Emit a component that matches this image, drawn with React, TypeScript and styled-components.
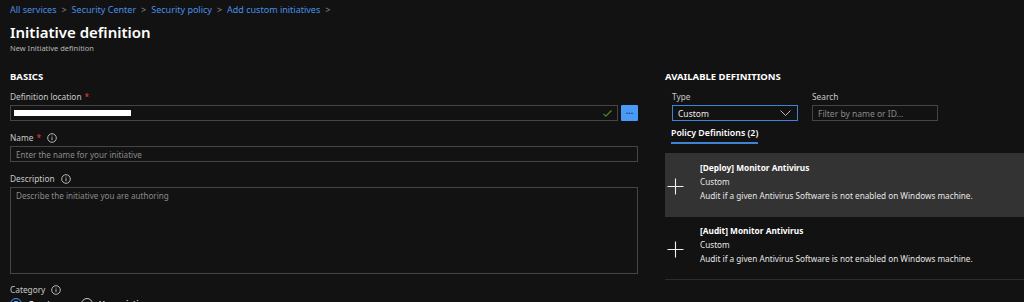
import React from "react";
import styled, { createGlobalStyle } from "styled-components";

const Global = createGlobalStyle`
  html, body {
    margin: 0;
    padding: 0;
    background: #121212;
    overflow: hidden;
  }
  body {
    font-family: "Noto Sans", "Open Sans", sans-serif;
    color: #d6d6d6;
  }
`;

const InfoIcon = () => (
  <svg width="10" height="10" viewBox="0 0 10 10">
    <circle cx="5" cy="5" r="4.3" fill="none" stroke="#c8c8c8" strokeWidth="0.9" />
    <rect x="4.55" y="4.2" width="0.9" height="3" fill="#c8c8c8" />
    <rect x="4.55" y="2.6" width="0.9" height="0.9" fill="#c8c8c8" />
  </svg>
);

const PlusIcon = () => (
  <svg width="17" height="17" viewBox="0 0 17 17">
    <path d="M8.5 0.5v16M0.5 8.5h16" stroke="#f0f0f0" strokeWidth="1.1" />
  </svg>
);

const crumbs = ["All services", "Security Center", "Security policy", "Add custom initiatives"];

const defs = [
  {
    title: "[Deploy] Monitor Antivirus",
    type: "Custom",
    desc: "Audit if a given Antivirus Software is not enabled on Windows machine.",
    active: true,
  },
  {
    title: "[Audit] Monitor Antivirus",
    type: "Custom",
    desc: "Audit if a given Antivirus Software is not enabled on Windows machine.",
    active: false,
  },
];

const App = () => {
  return (
    <S.Page>
      <Global />
      <S.Header>
        <S.Crumbs>
          {crumbs.map((c) => (
            <React.Fragment key={c}>
              <a>{c}</a>
              <span className="sep">&gt;</span>
            </React.Fragment>
          ))}
        </S.Crumbs>
        <S.Title>Initiative definition</S.Title>
        <S.Subtitle>New Initiative definition</S.Subtitle>
      </S.Header>

      <S.Columns>
        <S.Basics>
          <S.Section>BASICS</S.Section>

          <S.Label>
            Definition location <span className="req">*</span>
          </S.Label>
          <S.Row>
            <S.LocationBox>
              <span className="redacted" />
              <svg className="check" width="9" height="7" viewBox="0 0 9 7">
                <path d="M0.5 3.8l2.3 2.3 5.7-5.6" fill="none" stroke="#4c8a2a" strokeWidth="1.2" />
              </svg>
            </S.LocationBox>
            <S.DotsButton>...</S.DotsButton>
          </S.Row>

          <S.Label>
            Name <span className="req">*</span>
            <InfoIcon />
          </S.Label>
          <S.Input placeholder="Enter the name for your initiative" />

          <S.Label>
            Description
            <InfoIcon />
          </S.Label>
          <S.Textarea placeholder="Describe the initiative you are authoring" />

          <S.Label>
            Category
            <InfoIcon />
          </S.Label>
          <S.Radios>
            <S.Radio $checked>
              <span className="dot" />
              Create new
            </S.Radio>
            <S.Radio>
              <span className="dot" />
              Use existing
            </S.Radio>
          </S.Radios>
        </S.Basics>

        <S.Available>
          <S.Section>AVAILABLE DEFINITIONS</S.Section>
          <S.Filters>
            <div>
              <S.SmallLabel>Type</S.SmallLabel>
              <S.Select>
                Custom
                <svg width="11" height="6" viewBox="0 0 11 6">
                  <path d="M0.5 0.5l5 5 5-5" fill="none" stroke="#d0d0d0" strokeWidth="0.9" />
                </svg>
              </S.Select>
            </div>
            <div>
              <S.SmallLabel>Search</S.SmallLabel>
              <S.Search placeholder="Filter by name or ID..." />
            </div>
          </S.Filters>
          <S.Tab>Policy Definitions (2)</S.Tab>
          <S.List>
            {defs.map((d) => (
              <S.Item key={d.title} $active={d.active}>
                <div className="plus">
                  <PlusIcon />
                </div>
                <div className="text">
                  <strong>{d.title}</strong>
                  <span>{d.type}</span>
                  <span>{d.desc}</span>
                </div>
              </S.Item>
            ))}
          </S.List>
        </S.Available>
      </S.Columns>
    </S.Page>
  );
};

const S = {
  Page: styled.div`
    height: 302px;
    padding: 0 10px;
    box-sizing: border-box;
  `,
  Header: styled.div`
    padding-top: 3px;
  `,
  Crumbs: styled.div`
    display: flex;
    align-items: center;
    gap: 5px;
    font-size: 9px;
    line-height: 14px;
    a {
      color: #4b8fe8;
    }
    .sep {
      color: #8a8a8a;
    }
  `,
  Title: styled.h1`
    margin: 4px 0 0;
    font-size: 15px;
    line-height: 22px;
    font-weight: 600;
    color: #ffffff;
  `,
  Subtitle: styled.div`
    font-size: 7.5px;
    line-height: 10px;
    color: #b8b8b8;
  `,
  Columns: styled.div`
    display: flex;
    margin-top: 17px;
  `,
  Basics: styled.div`
    width: 628px;
    display: flex;
    flex-direction: column;
  `,
  Available: styled.div`
    flex: 1;
    margin-left: 27px;
    margin-right: -10px;
    display: flex;
    flex-direction: column;
  `,
  Section: styled.div`
    font-size: 9.5px;
    line-height: 13px;
    font-weight: 700;
    color: #ffffff;
    margin-bottom: 8px;
  `,
  Label: styled.div`
    display: flex;
    align-items: center;
    gap: 3px;
    font-size: 8.3px;
    line-height: 12px;
    color: #c8c8c8;
    margin-bottom: 2px;
    .req {
      color: #e04343;
    }
    svg {
      margin-left: 3px;
    }
  `,
  Row: styled.div`
    display: flex;
    align-items: center;
    gap: 3px;
    margin-bottom: 11px;
  `,
  LocationBox: styled.div`
    flex: 1;
    height: 16px;
    box-sizing: border-box;
    border: 1px solid #454545;
    display: flex;
    align-items: center;
    justify-content: space-between;
    padding: 0 5px 0 3px;
    .redacted {
      width: 117px;
      height: 6px;
      margin-top: -1px;
      background: #ffffff;
    }
  `,
  DotsButton: styled.div`
    width: 17px;
    height: 16px;
    background: #4a9af8;
    border-radius: 1px;
    color: #1f3f6e;
    font-size: 9px;
    line-height: 12px;
    text-align: center;
    font-weight: 700;
    box-sizing: border-box;
  `,
  Input: styled.input`
    width: 100%;
    height: 16px;
    box-sizing: border-box;
    border: 1px solid #454545;
    background: transparent;
    font-family: "Noto Sans", "Open Sans", sans-serif;
    font-size: 8.1px;
    padding: 0 5px;
    color: #ddd;
    margin: 0 0 11px;
    outline: none;
    &::placeholder {
      color: #8a8a8a;
    }
  `,
  Textarea: styled.textarea`
    width: 100%;
    height: 87px;
    box-sizing: border-box;
    border: 1px solid #454545;
    background: transparent;
    font-family: "Noto Sans", "Open Sans", sans-serif;
    font-size: 8.1px;
    line-height: 12px;
    padding: 2px 5px;
    color: #ddd;
    margin: 0 0 10px;
    resize: none;
    outline: none;
    display: block;
    &::placeholder {
      color: #8a8a8a;
    }
  `,
  Radios: styled.div`
    display: flex;
    gap: 6px;
    margin-top: 0;
  `,
  Radio: styled.label<{ $checked?: boolean }>`
    display: flex;
    align-items: flex-start;
    gap: 6px;
    font-size: 8.5px;
    line-height: 12px;
    font-weight: 600;
    color: #e6e6e6;
    .dot {
      width: 12px;
      height: 12px;
      box-sizing: border-box;
      border-radius: 50%;
      border: 1px solid ${(p) => (p.$checked ? "#4a9af8" : "#c8c8c8")};
      background: ${(p) =>
        p.$checked ? "radial-gradient(circle, #4a9af8 0 3px, transparent 3.5px)" : "transparent"};
    }
  `,
  Filters: styled.div`
    display: flex;
    gap: 14px;
    padding-left: 7px;
  `,
  SmallLabel: styled.div`
    font-size: 8.3px;
    line-height: 12px;
    color: #c8c8c8;
    margin-bottom: 2px;
  `,
  Select: styled.div`
    width: 126px;
    height: 16px;
    box-sizing: border-box;
    border: 1px solid #3f82d6;
    display: flex;
    align-items: center;
    justify-content: space-between;
    padding: 0 6px 0 5px;
    font-size: 8.5px;
    color: #ececec;
  `,
  Search: styled.input`
    display: block;
    width: 126px;
    height: 16px;
    box-sizing: border-box;
    border: 1px solid #454545;
    background: transparent;
    font-family: "Noto Sans", "Open Sans", sans-serif;
    font-size: 8.5px;
    padding: 0 5px;
    color: #ddd;
    margin: 0;
    outline: none;
    &::placeholder {
      color: #8a8a8a;
    }
  `,
  Tab: styled.div`
    align-self: flex-start;
    margin: 6px 0 0 6px;
    padding-bottom: 3px;
    border-bottom: 2px solid #3f82d6;
    font-size: 8.8px;
    line-height: 12px;
    font-weight: 600;
    color: #ffffff;
  `,
  List: styled.div`
    margin-top: 9px;
    border-bottom: 1px solid #2c2c2c;
  `,
  Item: styled.div<{ $active?: boolean }>`
    display: flex;
    align-items: center;
    height: ${(p) => (p.$active ? "64px" : "62px")};
    background: ${(p) => (p.$active ? "#333333" : "transparent")};
    .plus {
      width: 20px;
      display: flex;
      justify-content: center;
      padding-top: 2px;
    }
    .text {
      margin-left: 15px;
      margin-bottom: 6px;
      display: flex;
      flex-direction: column;
      font-size: 8.2px;
      line-height: 14px;
      color: #e6e6e6;
      strong {
        font-size: 8.3px;
        font-weight: 700;
        color: #ffffff;
      }
    }
  `,
};

export default App;
